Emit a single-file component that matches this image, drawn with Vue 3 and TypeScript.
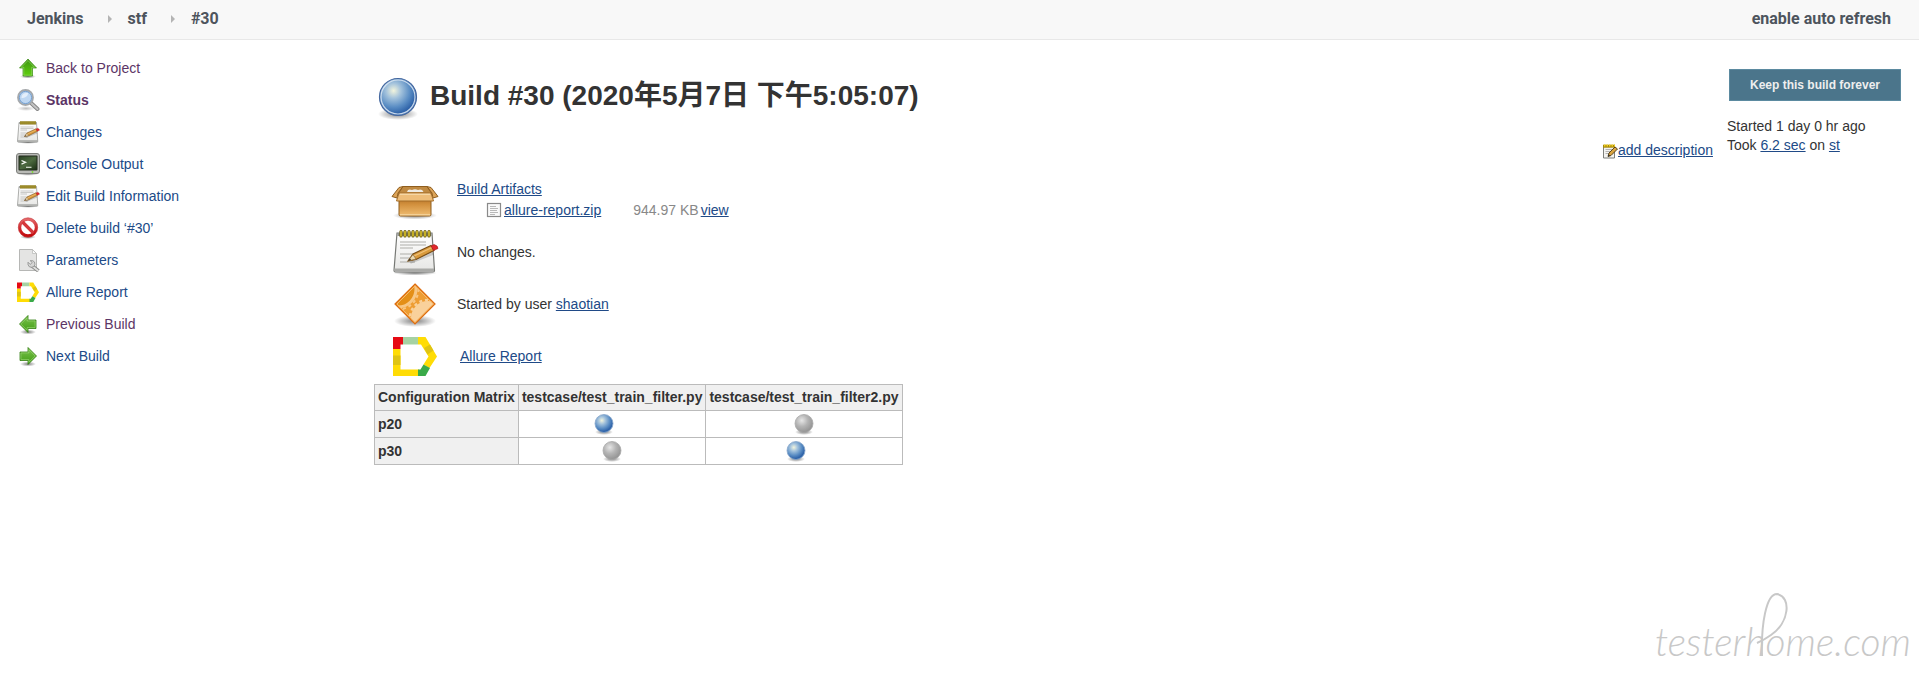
<script setup lang="ts">
interface Task {
  icon: string
  label: string
  visited?: boolean
  current?: boolean
}

const crumbs: string[] = ['Jenkins', 'stf', '#30']

const tasks: Task[] = [
  { icon: 'up', label: 'Back to Project', visited: true },
  { icon: 'search', label: 'Status', visited: true, current: true },
  { icon: 'notepad', label: 'Changes' },
  { icon: 'terminal', label: 'Console Output' },
  { icon: 'notepad', label: 'Edit Build Information' },
  { icon: 'forbidden', label: 'Delete build ‘#30’' },
  { icon: 'document', label: 'Parameters' },
  { icon: 'allure', label: 'Allure Report' },
  { icon: 'previous', label: 'Previous Build', visited: true },
  { icon: 'next', label: 'Next Build' },
]

const columns: string[] = ['testcase/test_train_filter.py', 'testcase/test_train_filter2.py']

const matrix: { name: string; built: boolean[] }[] = [
  { name: 'p20', built: [true, false] },
  { name: 'p30', built: [false, true] },
]
</script>

<template>
  <svg class="sprite" width="0" height="0" aria-hidden="true">
    <defs>
      <linearGradient id="g-green" x1="0" y1="0" x2="0" y2="1">
        <stop offset="0" stop-color="#3f9416" />
        <stop offset="1" stop-color="#5fd00c" />
      </linearGradient>
      <linearGradient id="g-green2" x1="0" y1="0" x2="0" y2="1">
        <stop offset="0" stop-color="#7cc24f" />
        <stop offset="1" stop-color="#3f9c12" />
      </linearGradient>
      <radialGradient id="g-blue" cx="0.38" cy="0.33" r="0.68">
        <stop offset="0" stop-color="#f2f4dd" />
        <stop offset="0.3" stop-color="#a3c2dc" />
        <stop offset="0.65" stop-color="#5a8dc4" />
        <stop offset="0.92" stop-color="#2e62a8" />
        <stop offset="1" stop-color="#3e72b4" />
      </radialGradient>
      <radialGradient id="g-grey" cx="0.38" cy="0.33" r="0.68">
        <stop offset="0" stop-color="#e6e6e6" />
        <stop offset="0.5" stop-color="#b4b4b4" />
        <stop offset="1" stop-color="#939393" />
      </radialGradient>
      <radialGradient id="g-shadow">
        <stop offset="0" stop-color="#000" stop-opacity="0.5" />
        <stop offset="1" stop-color="#000" stop-opacity="0" />
      </radialGradient>
      <linearGradient id="g-paper" x1="0" y1="0" x2="0" y2="1">
        <stop offset="0" stop-color="#fff" />
        <stop offset="1" stop-color="#e6e6e4" />
      </linearGradient>
      <linearGradient id="g-red" x1="0" y1="0" x2="0" y2="1">
        <stop offset="0" stop-color="#e4686a" />
        <stop offset="0.5" stop-color="#d22f32" />
        <stop offset="1" stop-color="#c20a0e" />
      </linearGradient>
      <linearGradient id="g-box" x1="0" y1="0" x2="0" y2="1">
        <stop offset="0" stop-color="#b9772a" />
        <stop offset="0.3" stop-color="#d18f3c" />
        <stop offset="1" stop-color="#f0bd72" />
      </linearGradient>
      <linearGradient id="g-screen" x1="0" y1="0" x2="1" y2="1">
        <stop offset="0" stop-color="#2d4526" />
        <stop offset="0.5" stop-color="#4d6a40" />
        <stop offset="1" stop-color="#1d3016" />
      </linearGradient>
      <clipPath id="c-diamond"><path d="M24 5 43 24 24 43 5 24z" /></clipPath>
    </defs>

    <symbol id="i-up" viewBox="0 0 24 24">
      <ellipse cx="12" cy="20.5" rx="8" ry="2" fill="url(#g-shadow)" />
      <path d="M12 3 20.500 12H16.500V20H7V12H3.500z" fill="url(#g-green)" stroke="#3b8a14" stroke-width="0.7" />
      <path d="M12 4.500 18.500 11.300H15.700V19.200H7.800V11.300H5.200z" fill="none" stroke="#9ad975" stroke-width="0.6" />
    </symbol>

    <symbol id="i-next" viewBox="0 0 24 24">
      <ellipse cx="12" cy="20" rx="8" ry="2.500" fill="url(#g-shadow)" />
      <path d="M4 8H12V3.500L20.500 12 12 20.500V16.500H4z" fill="url(#g-green2)" stroke="#347e12" stroke-width="0.8" />
      <path d="M4.900 8.900H12.900V5.700L19.200 12 12.900 18.300V15.600H4.900z" fill="none" stroke="#a5dc80" stroke-width="0.6" />
    </symbol>

    <symbol id="i-previous" viewBox="0 0 24 24">
      <ellipse cx="12" cy="20" rx="8" ry="2.500" fill="url(#g-shadow)" />
      <path d="M20 8H12V3.500L3.500 12 12 20.500V16.500H20z" fill="url(#g-green2)" stroke="#347e12" stroke-width="0.8" />
      <path d="M19.100 8.900H11.100V5.700L4.800 12 11.100 18.300V15.600H19.100z" fill="none" stroke="#a5dc80" stroke-width="0.6" />
    </symbol>

    <symbol id="i-search" viewBox="0 0 24 24">
      <ellipse cx="10" cy="20.500" rx="9" ry="2.500" fill="url(#g-shadow)" opacity="0.5" />
      <path d="M15 15 21.500 21" stroke="#858585" stroke-width="4" stroke-linecap="round" />
      <path d="M15 15 21.500 21" stroke="#c4c4c4" stroke-width="2" stroke-linecap="round" />
      <circle cx="9.500" cy="9.500" r="7.500" fill="#a9c9ec" stroke="#a5a8ab" stroke-width="1.800" />
      <circle cx="9.500" cy="9.500" r="6.100" fill="#bed7f2" stroke="#6f9bcc" stroke-width="0.9" />
      <path d="M5.500 10C5.500 6 8 4.500 12 5 12 8.500 9 10 5.500 10z" fill="#e4effb" />
    </symbol>

    <symbol id="i-notepad" viewBox="0 0 48 48">
      <ellipse cx="24" cy="45" rx="22" ry="2.500" fill="url(#g-shadow)" />
      <path d="M6 5H41L43.500 42.500Q43.500 44 42 44H4.500Q3 44 3 42.500z" fill="url(#g-paper)" stroke="#777975" stroke-width="1.200" />
      <path d="M3.500 40.500H43V43.500H3.500z" fill="#a9aaa7" />
      <path d="M6.500 5H40.500V8H6.500z" fill="#92938d" />
      <path d="M9 14H35M9 17H35M9 20H22M9 26H31M9 30H28M9 34H24" stroke="#adada9" stroke-width="1.200" />
      <path d="M10 3.500V8M14 3.500V8M18 3.500V8M22 3.500V8M26 3.500V8M30 3.500V8M34 3.500V8M38 3.500V8" stroke="#66580b" stroke-width="3.200" stroke-linecap="round" />
      <path d="M10 3.500V8M14 3.500V8M18 3.500V8M22 3.500V8M26 3.500V8M30 3.500V8M34 3.500V8M38 3.500V8" stroke="#e4ca30" stroke-width="1.500" stroke-linecap="round" />
      <path d="M19 34 42 25" stroke="#555" stroke-opacity="0.25" stroke-width="4" />
      <path d="M17 33 22 26 40 17.500 43 22.500 25 31.500z" fill="#d99a3c" stroke="#784c14" stroke-width="1.100" />
      <path d="M23 28 41 19.500" stroke="#f0c178" stroke-width="1.300" />
      <path d="M17 33 22 26.500 25 31z" fill="#ead9b4" stroke="#8a6a38" stroke-width="0.700" />
      <path d="M17 33 19 30.500 20 32z" fill="#222" />
      <path d="M40 18 43 16.500Q47 17.500 47 20.500L42.500 22.500z" fill="#e2282c" stroke="#9d1418" stroke-width="0.600" />
    </symbol>

    <symbol id="i-terminal" viewBox="0 0 24 24">
      <ellipse cx="12" cy="21.800" rx="11" ry="2" fill="url(#g-shadow)" />
      <rect x="0.500" y="1.500" width="23" height="20" rx="2.500" fill="#b9bab6" stroke="#7d7e7b" />
      <rect x="2.500" y="3.500" width="19" height="15" rx="1" fill="#222a1d" />
      <rect x="3.500" y="4.500" width="17" height="13" fill="url(#g-screen)" />
      <path d="M5.500 8.500 9.500 10.300 5.500 12.100" fill="none" stroke="#f2f5ee" stroke-width="1.300" />
      <path d="M10 15.300H15.500" stroke="#dde4d8" stroke-width="1.200" />
      <circle cx="16.500" cy="20" r="0.900" fill="#7bdd31" />
    </symbol>

    <symbol id="i-forbidden" viewBox="0 0 24 24">
      <ellipse cx="12" cy="21" rx="8" ry="2" fill="url(#g-shadow)" />
      <circle cx="12" cy="11.500" r="8.300" fill="#fff" stroke="url(#g-red)" stroke-width="3" />
      <path d="M6.500 6 17.500 17" stroke="#d5373a" stroke-width="3.200" />
      <circle cx="12" cy="11.500" r="9.700" fill="none" stroke="#c5383b" stroke-width="0.600" />
    </symbol>

    <symbol id="i-document" viewBox="0 0 24 24">
      <path d="M3.500 1.500H16.500L20.500 5.500V22.500H3.500z" fill="#e4e4e3" stroke="#b6b7b5" />
      <path d="M16.500 1.500V5.500H20.500z" fill="#fafafa" stroke="#b6b7b5" stroke-width="0.700" />
      <path d="M15.500 17.500 22.500 23" stroke="#888987" stroke-width="3.600" />
      <path d="M15.500 17.500 22.500 23" stroke="#e0e0df" stroke-width="1.800" />
      <path d="M12 14.200 14.200 16.400 16.300 14.500 14.200 12.700Q17 12 18.500 14 19.500 16.500 18 18.500 15.500 20 13.200 18.700 11.500 17 12 14.200z" fill="#d6d6d5" stroke="#8c8d8b" stroke-width="0.800" />
    </symbol>

    <symbol id="i-allure" viewBox="-2 -5 48 48">
      <path d="M0 12H7.500V32.500H26V39H0z" fill="#ffdc05" />
      <path d="M0 0H10V7.500H7.500V12H0z" fill="#e60a14" />
      <path d="M10 0H25V7.500H10z" fill="#a6d2a3" />
      <path d="M25 0H32.500L44 19.500 36.500 31 30.500 27.500 35.500 19.500 28 7.500H25z" fill="#ffdc05" />
      <path d="M31 11 37 7.500 40.500 13.500 34.500 17.500zM0 18.500H7.500V28H0z" fill="#dfc413" />
      <path d="M25 32.500H27.500L30.500 27.500 37 31 32.500 39H25z" fill="#3aaa49" />
    </symbol>

    <symbol id="i-ball-blue" viewBox="0 0 48 48">
      <ellipse cx="24" cy="41" rx="20" ry="6" fill="url(#g-shadow)" />
      <circle cx="24" cy="24" r="18.500" fill="url(#g-blue)" stroke="#44679f" stroke-width="1.200" />
      <circle cx="24" cy="24" r="17" fill="none" stroke="#e0eaf4" stroke-opacity="0.85" stroke-width="1.200" />
    </symbol>

    <symbol id="i-dot-blue" viewBox="0 0 24 24">
      <ellipse cx="12" cy="20" rx="9" ry="3" fill="url(#g-shadow)" />
      <circle cx="12" cy="11.500" r="9" fill="url(#g-blue)" stroke="#86a6ca" stroke-width="0.800" />
    </symbol>

    <symbol id="i-dot-grey" viewBox="0 0 24 24">
      <ellipse cx="12" cy="20" rx="9" ry="3" fill="url(#g-shadow)" />
      <circle cx="12" cy="11.500" r="9" fill="url(#g-grey)" stroke="#a8a8a8" stroke-width="0.800" />
    </symbol>

    <symbol id="i-box" viewBox="0 0 48 48">
      <ellipse cx="24" cy="39.500" rx="22" ry="4" fill="url(#g-shadow)" />
      <path d="M12 10.500H36L41 18H7z" fill="#c08a42" stroke="#8f5e1e" />
      <path d="M16 16Q17 12.500 21 14 24 12.500 27 14 31 12.500 32.500 16z" fill="#eeeae2" />
      <path d="M8 23H40V38.500Q40 40 38.500 40H9.500Q8 40 8 38.500z" fill="url(#g-box)" stroke="#8f5e1e" />
      <path d="M9 38.800H39" stroke="#f7dba9" />
      <path d="M12 10.500 7 17 6 22 1 20.500 8 11.500zM36 10.500 41 17 42 22 47 20.500 40 11.500z" fill="#dda458" stroke="#8f5e1e" />
      <path d="M8 17H40L42.500 25H5.500z" fill="#eebd79" stroke="#a36d28" />
      <path d="M9 18.200H39" stroke="#fae2b8" />
    </symbol>

    <symbol id="i-gears" viewBox="0 0 48 48">
      <ellipse cx="24" cy="41" rx="21" ry="6" fill="url(#g-shadow)" />
      <path d="M24 4 44 24 24 44 4 24z" fill="#ee9d33" />
      <g clip-path="url(#c-diamond)">
        <circle cx="7" cy="9" r="17" fill="#e48f17" />
        <circle cx="7" cy="9" r="18" fill="none" stroke="#f8c785" stroke-width="3" />
        <circle cx="7" cy="9" r="20.500" fill="none" stroke="#f8c785" stroke-width="2" stroke-dasharray="3 3" />
        <circle cx="37" cy="38" r="17" fill="#f9d19b" />
        <circle cx="37" cy="38" r="18" fill="none" stroke="#f9d19b" stroke-width="2.500" stroke-dasharray="3 2.800" />
      </g>
      <path d="M24 4 44 24 24 44 4 24z" fill="none" stroke="#dd6d12" stroke-width="1.200" />
      <path d="M24 6 42 24 24 42 6 24z" fill="none" stroke="#f7bd73" stroke-width="0.900" />
    </symbol>

    <symbol id="i-text" viewBox="0 0 16 16">
      <rect x="1.500" y="1.500" width="13" height="13" fill="#fafafa" stroke="#8a8a8a" stroke-width="1.200" />
      <path d="M4 4.500H10M4 6.500H12M4 8.500H11M4 10.500H12M4 12.500H9" stroke="#b9b9b9" />
    </symbol>

    <symbol id="i-edit" viewBox="0 0 16 16">
      <path d="M1.500 3H12.500V15H1.500z" fill="#f3f3f1" stroke="#7d7f7b" />
      <path d="M3.500 6.500H10M3.500 8.500H9M3.500 10.500H7" stroke="#b4b4b2" />
      <path d="M1 3.200H13" stroke="#a7880c" stroke-width="3" />
      <path d="M2 2.500H13" stroke="#f3d21f" stroke-width="2" stroke-dasharray="1.500 1" />
      <path d="M6 13.500 7 10 13 4 15.500 6 9 12.500z" fill="#d9a440" stroke="#4a3613" stroke-width="0.900" />
      <path d="M6 13.500 6.700 11.500 8 12.700z" fill="#222" />
    </symbol>
  </svg>

  <div class="page">
    <header class="topbar">
      <nav class="crumbs" aria-label="Breadcrumb">
        <template v-for="(crumb, i) in crumbs" :key="crumb">
          <svg v-if="i > 0" class="chevron" viewBox="0 0 4 8" aria-hidden="true">
            <path d="M0 0 4 4 0 8z" fill="#b4b4b4" />
          </svg>
          <a href="#">{{ crumb }}</a>
        </template>
      </nav>
      <a href="#" class="refresh">enable auto refresh</a>
    </header>

    <div class="body">
      <nav class="tasks" aria-label="Build tasks">
        <a
          v-for="task in tasks"
          :key="task.label"
          href="#"
          class="task"
          :class="{ visited: task.visited, current: task.current }"
        >
          <svg class="icon24" aria-hidden="true"><use :href="`#i-${task.icon}`" /></svg>
          <span>{{ task.label }}</span>
        </a>
      </nav>

      <main class="main">
        <section class="content">
          <h1>
            <svg class="icon48" aria-hidden="true"><use href="#i-ball-blue" /></svg>
            <span>Build #30 (2020年5月7日 下午5:05:07)</span>
          </h1>
          <div class="describe">
            <a href="#"><svg class="icon16" aria-hidden="true"><use href="#i-edit" /></svg><span>add description</span></a>
          </div>

          <div class="summary">
            <div class="item">
              <svg class="icon48" aria-hidden="true"><use href="#i-box" /></svg>
              <div class="artifacts">
                <a href="#">Build Artifacts</a>
                <div class="file">
                  <svg class="icon16" aria-hidden="true"><use href="#i-text" /></svg>
                  <a href="#">allure-report.zip</a>
                  <span class="size">944.97 KB</span>
                  <a href="#">view</a>
                </div>
              </div>
            </div>
            <div class="item">
              <svg class="icon48" aria-hidden="true"><use href="#i-notepad" /></svg>
              <div>No changes.</div>
            </div>
            <div class="item">
              <svg class="icon48" aria-hidden="true"><use href="#i-gears" /></svg>
              <div>Started by user <a href="#">shaotian</a></div>
            </div>
            <div class="item">
              <svg class="icon48" aria-hidden="true"><use href="#i-allure" /></svg>
              <a href="#" class="report">Allure Report</a>
            </div>
          </div>

          <table class="matrix">
            <thead>
              <tr>
                <th scope="col">Configuration Matrix</th>
                <th v-for="column in columns" :key="column" scope="col">{{ column }}</th>
              </tr>
            </thead>
            <tbody>
              <tr v-for="row in matrix" :key="row.name">
                <th scope="row">{{ row.name }}</th>
                <td v-for="(built, i) in row.built" :key="i">
                  <a v-if="built" href="#" class="run" aria-label="Success">
                    <svg class="dot"><use href="#i-dot-blue" /></svg>
                  </a>
                  <svg v-else class="dot" role="img" aria-label="Not built"><use href="#i-dot-grey" /></svg>
                </td>
              </tr>
            </tbody>
          </table>
        </section>

        <aside class="side">
          <button type="button">Keep this build forever</button>
          <div>Started 1 day 0 hr ago</div>
          <div>Took <a href="#">6.2 sec</a> on <a href="#">st</a></div>
        </aside>
      </main>
    </div>

    <footer class="watermark">
      <svg viewBox="0 0 268 100">
        <text x="4" y="71">testerhome.com</text>
        <path d="M111 71C110 40 115 9 126 9 141 12 138 38 120 50Q113 55 106 58" />
      </svg>
    </footer>
  </div>
</template>

<style scoped>
.page {
  display: flex;
  flex-direction: column;
  min-height: 100vh;
  font-family: "Liberation Sans", "Noto Sans CJK SC", sans-serif;
  font-size: 14px;
  line-height: 19px;
  color: #333;
  background: #fff;
}
.sprite {
  position: absolute;
}
svg {
  flex: none;
}
a {
  color: #204a87;
}
.topbar {
  display: flex;
  justify-content: space-between;
  align-items: center;
  box-sizing: border-box;
  height: 40px;
  padding: 0 28px 2px 27px;
  background: #f8f8f8;
  border-bottom: 1px solid #e8e8e8;
  font-family: Roboto, sans-serif;
  font-size: 16px;
  font-weight: 700;
}
.topbar a {
  color: #4d545d;
  text-decoration: none;
}
.crumbs {
  display: flex;
  align-items: center;
}
.chevron {
  width: 4px;
  height: 8px;
  margin: 0 16px 0 24px;
}
.body {
  display: flex;
  align-items: flex-start;
}
.tasks {
  display: flex;
  flex-direction: column;
  gap: 8px;
  width: 374px;
  padding: 16px 0 0 16px;
  box-sizing: border-box;
  flex: none;
}
.task {
  display: flex;
  align-items: center;
  gap: 6px;
  height: 24px;
  text-decoration: none;
}
.task.visited {
  color: #5c3566;
}
.task.current {
  font-weight: 700;
}
.icon24 {
  width: 24px;
  height: 24px;
}
.icon16 {
  width: 16px;
  height: 16px;
}
.icon48 {
  width: 48px;
  height: 48px;
}
.main {
  display: flex;
  flex: 1;
  gap: 14px;
  padding-right: 18px;
}
.content {
  flex: 1;
}
h1 {
  display: flex;
  align-items: center;
  gap: 8px;
  margin: 33px 0 0;
  height: 48px;
  font-size: 28px;
  line-height: 32px;
}
h1 span {
  padding-bottom: 2px;
}
.describe {
  display: flex;
  justify-content: flex-end;
  margin-top: 20px;
}
.describe a {
  display: flex;
  align-items: center;
  text-decoration: none;
}
.describe span {
  text-decoration: underline;
}
.summary {
  display: flex;
  flex-direction: column;
  gap: 4px;
  margin: 16px 0 0 17px;
}
.item {
  display: flex;
  align-items: center;
  gap: 18px;
  height: 48px;
}
.report {
  padding-left: 3px;
}
.artifacts {
  align-self: flex-start;
  padding-top: 4px;
}
.file {
  display: flex;
  align-items: center;
  gap: 2px;
  height: 22px;
  padding-left: 29px;
}
.size {
  padding-left: 30px;
  color: #888;
}
.matrix {
  margin-top: 4px;
  border-collapse: collapse;
}
.matrix th,
.matrix td {
  border: 1px solid #bbb;
  text-align: center;
}
.matrix th {
  padding: 3px;
  background: #f0f0f0;
}
.matrix td {
  padding: 1px 3px;
}
.matrix tbody th {
  text-align: left;
}
.run {
  display: block;
  padding-right: 16px;
}
.dot {
  display: block;
  width: 24px;
  height: 24px;
  margin: 0 auto;
}
.side {
  padding-top: 29px;
}
.side button {
  display: block;
  margin: 0 0 16px 2px;
  padding: 0 20px;
  height: 32px;
  border: 1px solid #5b8aa0;
  background: #4b758b;
  color: #eee;
  font: bold 12px "Liberation Sans", sans-serif;
}
.watermark {
  display: flex;
  justify-content: flex-end;
  margin-top: auto;
}
.watermark svg {
  width: 268px;
  height: 100px;
}
.watermark text {
  font: italic 300 39px Lato, cursive;
  fill: #c8c8c8;
}
.watermark path {
  fill: none;
  stroke: #c8c8c8;
  stroke-width: 2;
}
</style>

<style>
body {
  margin: 0;
}
</style>
